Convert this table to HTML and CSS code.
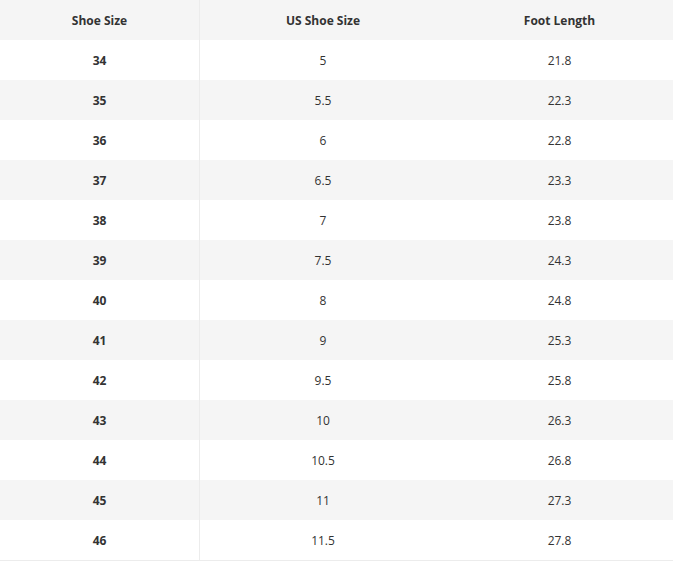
FILE: index.html
```html
<!DOCTYPE html>
<html>
<head>
<meta charset="utf-8">
<link rel="stylesheet" href="styles.css">
</head>
<body>
<table class="size-table">
  <thead>
    <tr><th class="c1">Shoe Size</th><th class="c2">US Shoe Size</th><th class="c3">Foot Length</th></tr>
  </thead>
  <tbody>
    <tr><td class="c1">34</td><td>5</td><td>21.8</td></tr>
    <tr><td class="c1">35</td><td>5.5</td><td>22.3</td></tr>
    <tr><td class="c1">36</td><td>6</td><td>22.8</td></tr>
    <tr><td class="c1">37</td><td>6.5</td><td>23.3</td></tr>
    <tr><td class="c1">38</td><td>7</td><td>23.8</td></tr>
    <tr><td class="c1">39</td><td>7.5</td><td>24.3</td></tr>
    <tr><td class="c1">40</td><td>8</td><td>24.8</td></tr>
    <tr><td class="c1">41</td><td>9</td><td>25.3</td></tr>
    <tr><td class="c1">42</td><td>9.5</td><td>25.8</td></tr>
    <tr><td class="c1">43</td><td>10</td><td>26.3</td></tr>
    <tr><td class="c1">44</td><td>10.5</td><td>26.8</td></tr>
    <tr><td class="c1">45</td><td>11</td><td>27.3</td></tr>
    <tr><td class="c1">46</td><td>11.5</td><td>27.8</td></tr>
  </tbody>
</table>
</body>
</html>
```
FILE: styles.css
```css
html, body {
  margin: 0;
  padding: 0;
  background: #ffffff;
}
.size-table {
  width: 673px;
  border-collapse: collapse;
  table-layout: fixed;
  font-family: "Open Sans", "Liberation Sans", sans-serif;
  font-size: 12px;
  color: #333333;
  border-bottom: 1px solid #ececec;
}
.size-table th,
.size-table td {
  height: 40px;
  padding: 0;
  text-align: center;
  vertical-align: middle;
}
.size-table th {
  font-weight: 700;
  background: #f5f5f5;
}
.size-table tbody tr:nth-child(even) td {
  background: #f5f5f5;
}
.size-table td {
  font-weight: 400;
}
.size-table td.c1 {
  font-weight: 700;
}
.size-table .c1 {
  width: 199px;
  border-right: 1px solid #ececec;
}
.size-table .c2 {
  width: 246px;
}
```
